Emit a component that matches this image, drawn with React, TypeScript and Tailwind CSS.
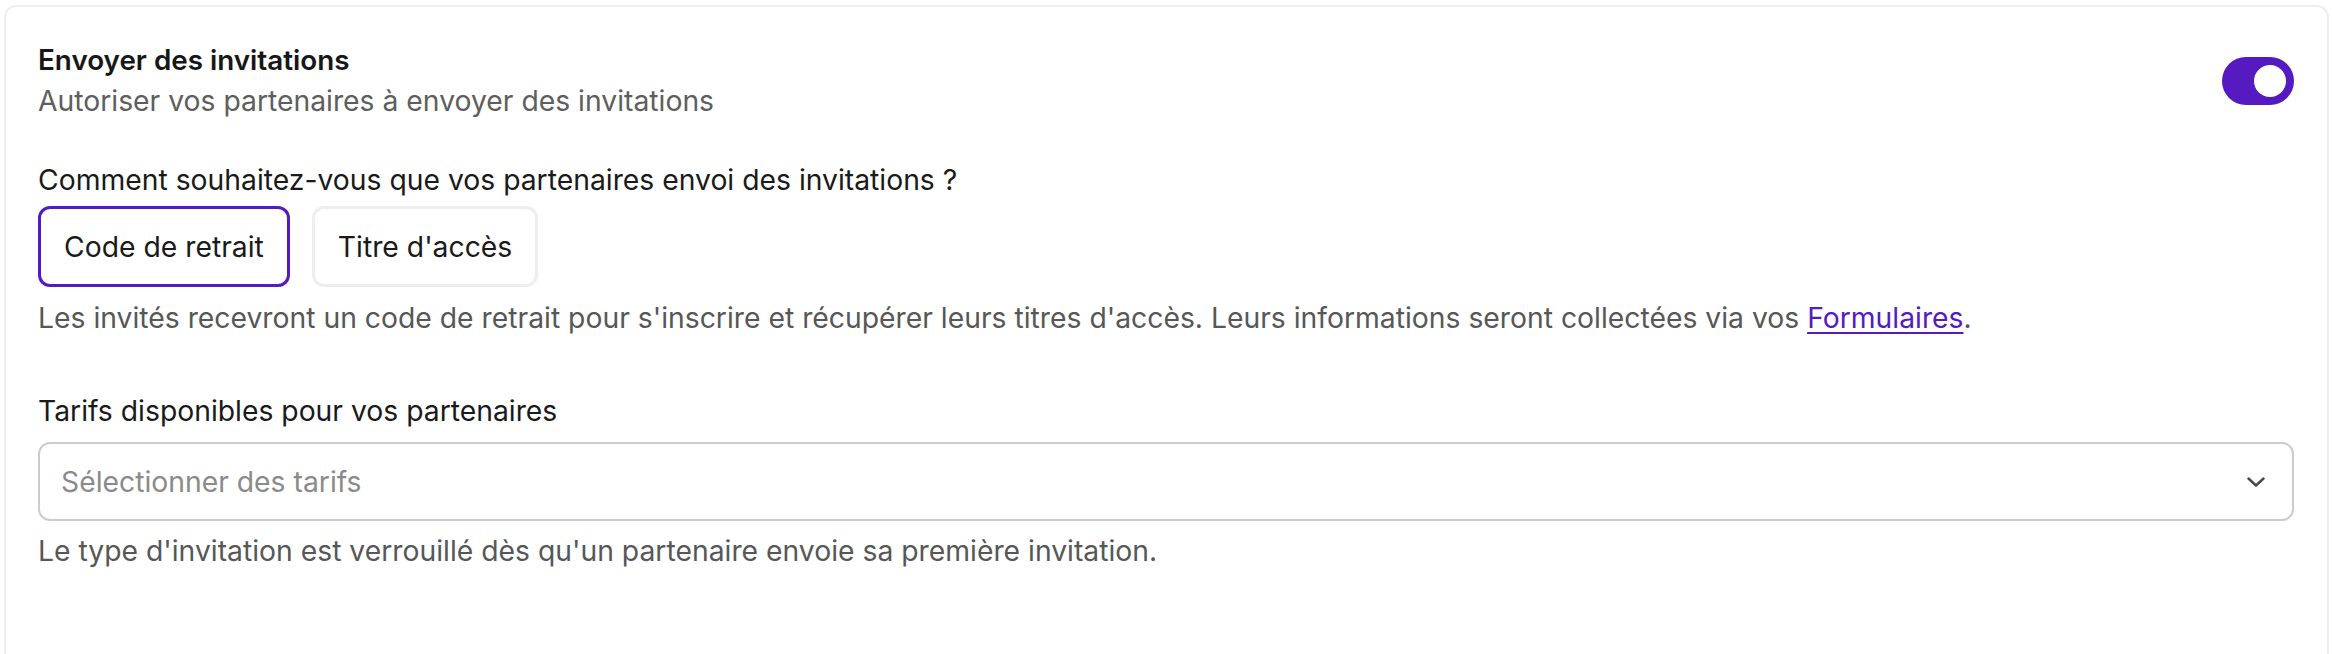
import { useState } from "react";

const PURPLE = "#561bc0";

function Toggle({ on, onChange }: { on: boolean; onChange: (v: boolean) => void }) {
  return (
    <button
      type="button"
      role="switch"
      aria-checked={on}
      onClick={() => onChange(!on)}
      className={`flex h-[48px] w-[72px] shrink-0 items-center rounded-full px-[8px] ${
        on ? "justify-end bg-[#561bc0]" : "justify-start bg-[#d4d4d4]"
      }`}
    >
      <span className="block h-[32px] w-[32px] rounded-full bg-white" />
    </button>
  );
}

function ChoiceBtn({
  label,
  active,
  onClick,
}: {
  label: string;
  active: boolean;
  onClick: () => void;
}) {
  return (
    <button
      type="button"
      onClick={onClick}
      className={`flex h-[81px] items-center rounded-[12px] border-[3px] bg-white px-[23px] text-[28.3px] leading-[40px] text-[#1a1a1a] ${
        active ? "border-[#561bc0]" : "border-[#eeeeee]"
      }`}
    >
      {label}
    </button>
  );
}

export default function App() {
  const [enabled, setEnabled] = useState(true);
  const [mode, setMode] = useState<"code" | "titre">("code");

  return (
    <div className="min-h-screen bg-white pt-[5px] pl-[4px] pr-[3px] font-['Inter',sans-serif] antialiased">
      <div className="min-h-[720px] rounded-[12px] border-2 border-[#eeeeee] bg-white pt-[33px] pl-[32px] pr-[33px]">
        {/* Header */}
        <div className="flex items-start justify-between">
          <div>
            <div className="text-[27.8px] font-semibold leading-[40px] text-[#171717]">
              Envoyer des invitations
            </div>
            <div className="mt-[1px] text-[28.3px] leading-[40px] text-[#5e5e5e]">
              Autoriser vos partenaires à envoyer des invitations
            </div>
          </div>
          <div className="mt-[17px]">
            <Toggle on={enabled} onChange={setEnabled} />
          </div>
        </div>

        {/* Type d'invitation */}
        <div className="mt-[39px] text-[28.3px] leading-[40px] text-[#1a1a1a]">
          Comment souhaitez-vous que vos partenaires envoi des invitations ?
        </div>
        <div className="mt-[6px] flex gap-[22px]">
          <ChoiceBtn label="Code de retrait" active={mode === "code"} onClick={() => setMode("code")} />
          <ChoiceBtn label="Titre d'accès" active={mode === "titre"} onClick={() => setMode("titre")} />
        </div>
        <p className="mt-[11px] text-[28.3px] leading-[40px] text-[#575757]">
          Les invités recevront un code de retrait pour s'inscrire et récupérer leurs titres d'accès. Leurs
          informations seront collectées via vos{" "}
          <a href="#" className="underline underline-offset-[4px]" style={{ color: PURPLE }}>
            Formulaires
          </a>
          .
        </p>

        {/* Tarifs */}
        <div className="mt-[53px] text-[28.3px] leading-[40px] text-[#1a1a1a]">
          Tarifs disponibles pour vos partenaires
        </div>
        <button
          type="button"
          className="mt-[11px] flex h-[79px] w-full items-center justify-between rounded-[12px] border-2 border-[#cccccc] bg-white pl-[21px] pr-[26px]"
        >
          <span className="text-[28.3px] leading-[40px] text-[#8a8a8a]">Sélectionner des tarifs</span>
          <svg width="20" height="12" viewBox="0 0 20 12" fill="none">
            <path
              d="M2.5 2.5 10 9.5 17.5 2.5"
              stroke="#4a4a4a"
              strokeWidth="2.5"
              strokeLinecap="round"
              strokeLinejoin="round"
            />
          </svg>
        </button>
        <p className="mt-[10px] text-[28.3px] leading-[40px] text-[#575757]">
          Le type d'invitation est verrouillé dès qu'un partenaire envoie sa première invitation.
        </p>
      </div>
    </div>
  );
}
